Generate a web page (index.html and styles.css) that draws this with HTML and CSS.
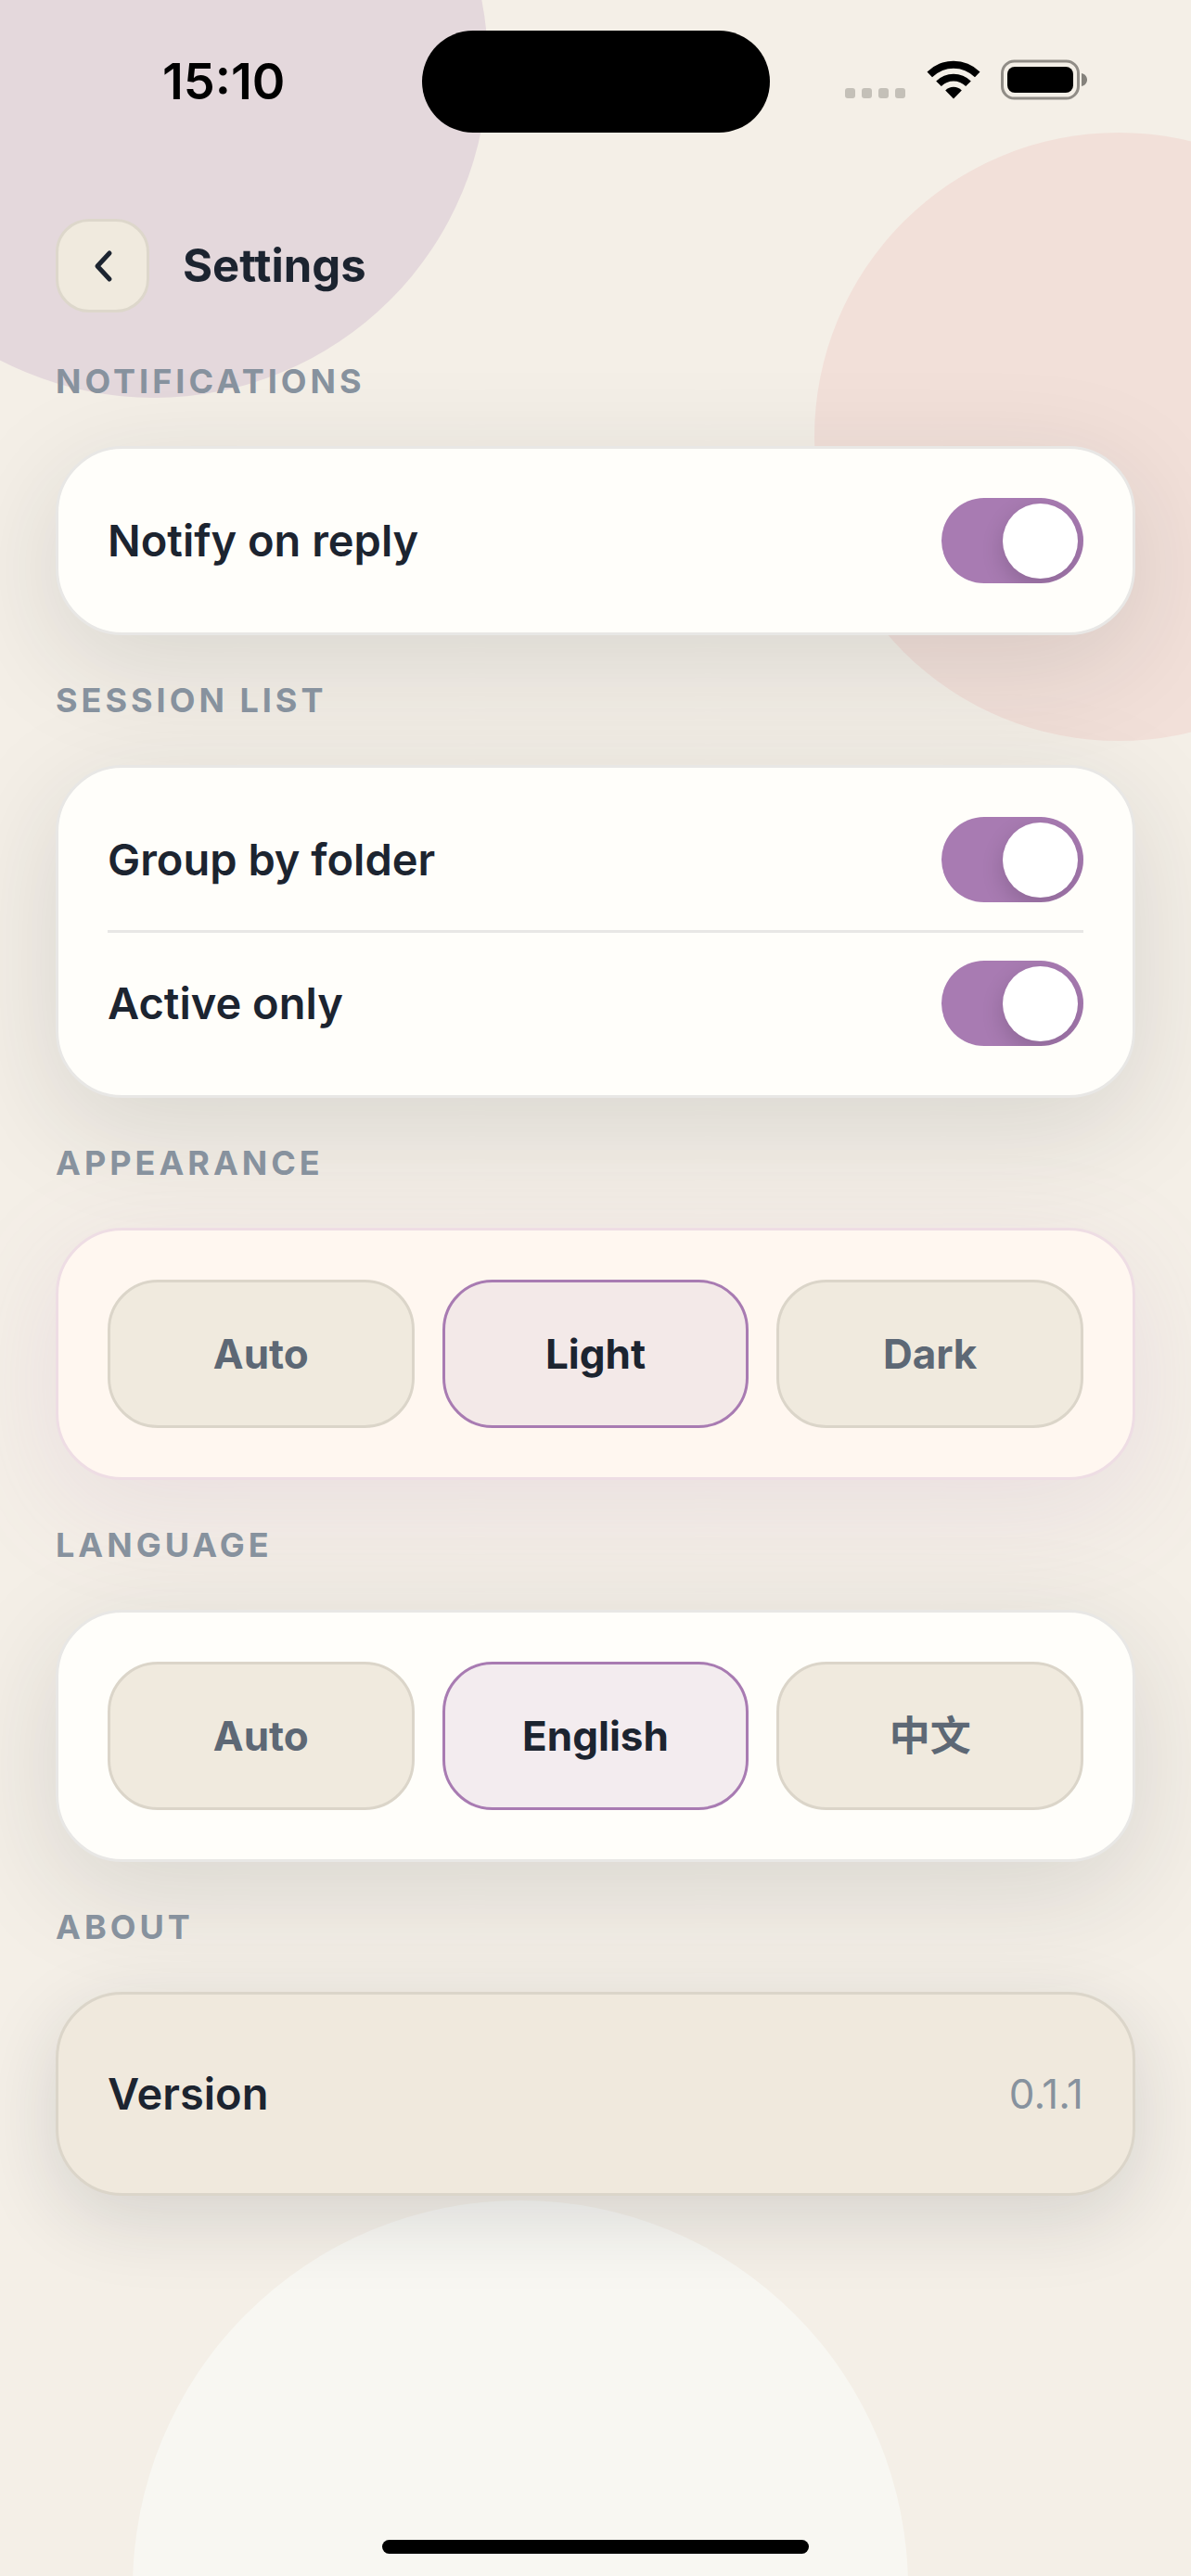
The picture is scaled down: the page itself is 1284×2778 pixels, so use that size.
FILE: index.html
```html
<!DOCTYPE html>
<html lang="en">
<head>
  <meta charset="UTF-8" />
  <meta name="viewport" content="width=device-width, initial-scale=1.0" />
  <title>Settings</title>
  <link rel="stylesheet" href="styles.css">
</head>
<body>
  <div class="screen">
    <div class="blob blob-purple"></div>
    <div class="blob blob-pink"></div>
    <div class="blob blob-white"></div>

    <div class="status-bar">
      <span class="time">15:10</span>
      <div class="island"></div>
      <div class="status-icons">
        <svg width="66" height="44" viewBox="0 0 66 44" fill="#c4c0b8">
          <rect x="0" y="31" width="11" height="11" rx="3" />
          <rect x="18" y="31" width="11" height="11" rx="3" />
          <rect x="36" y="31" width="11" height="11" rx="3" />
          <rect x="54" y="31" width="11" height="11" rx="3" />
        </svg>
        <svg width="58" height="44" viewBox="0 0 58 44">
          <path d="M0.5 13.5 A40.5 40.5 0 0 1 57.5 13.5 L52 19.2 A32.6 32.6 0 0 0 6 19.2 Z" />
          <path d="M10.2 23.4 A26.8 26.8 0 0 1 47.8 23.4 L42.2 29 A18.8 18.8 0 0 0 15.8 29 Z" />
          <path d="M20.2 33.4 A12.6 12.6 0 0 1 37.8 33.4 L29 42.4 Z" />
        </svg>
        <svg width="94" height="44" viewBox="0 0 94 44">
          <rect x="1.5" y="2" width="82" height="40" rx="13" fill="none" stroke="#918d87" stroke-width="3" />
          <rect x="7" y="8" width="71" height="28" rx="8" />
          <path d="M87 15 C91 16 93 19 93 22 C93 25 91 28 87 29 Z" fill="#85827c" />
        </svg>
      </div>
    </div>

    <header class="header">
      <button class="back" aria-label="Back">
        <svg width="24" height="36" viewBox="0 0 24 36" fill="none" stroke="#1c2430" stroke-width="5" stroke-linecap="round" stroke-linejoin="round">
          <path d="M19 4 L6 18 L19 32" />
        </svg>
      </button>
      <h1>Settings</h1>
    </header>

    <main>
      <h2>NOTIFICATIONS</h2>
      <section class="card">
        <div class="row">
          <label for="notify">Notify on reply</label>
          <input type="checkbox" class="switch" id="notify" checked />
        </div>
      </section>

      <h2>SESSION LIST</h2>
      <section class="card">
        <div class="row">
          <label for="group">Group by folder</label>
          <input type="checkbox" class="switch" id="group" checked />
        </div>
        <hr />
        <div class="row">
          <label for="active">Active only</label>
          <input type="checkbox" class="switch" id="active" checked />
        </div>
      </section>

      <h2>APPEARANCE</h2>
      <section class="card card-warm">
        <div class="options">
          <button class="option">Auto</button>
          <button class="option selected">Light</button>
          <button class="option">Dark</button>
        </div>
      </section>

      <h2>LANGUAGE</h2>
      <section class="card">
        <div class="options">
          <button class="option">Auto</button>
          <button class="option selected">English</button>
          <button class="option" lang="zh">中文</button>
        </div>
      </section>

      <h2>ABOUT</h2>
      <section class="card card-sand">
        <div class="row">
          <span>Version</span>
          <span class="value">0.1.1</span>
        </div>
      </section>
    </main>

    <div class="home-indicator"></div>
  </div>

  <script>
    // one selected option per group
    document.querySelectorAll(".options").forEach((group) => {
      const options = group.querySelectorAll(".option");
      options.forEach((btn) => {
        btn.addEventListener("click", () => {
          options.forEach((b) => b.classList.remove("selected"));
          btn.classList.add("selected");
        });
      });
    });
  </script>
</body>
</html>
```
FILE: styles.css
```css
* {
  box-sizing: border-box;
}

body {
  margin: 0;
  background-color: #f4efe7;
  color: #1c2430;
  font-family: Inter, "Noto Sans CJK SC", sans-serif;
}

button {
  font-family: inherit;
  cursor: pointer;
}

.screen {
  position: relative;
  display: flex;
  flex-direction: column;
  min-height: 100vh;
  padding: 33px 60px 24px;
  overflow: hidden;
  isolation: isolate;
}

/* background circles */
.blob {
  position: absolute;
  z-index: -1;
  border-radius: 50%;
}

.blob-purple {
  top: -291px;
  left: -194px;
  width: 720px;
  height: 720px;
  background-color: #e4d8dc;
}

.blob-pink {
  top: 143px;
  right: -250px;
  width: 656px;
  height: 656px;
  background-color: #f2e0d9;
}

.blob-white {
  bottom: -431px;
  left: 143px;
  width: 836px;
  height: 836px;
  background-color: #f8f7f2;
}

.status-bar {
  display: grid;
  grid-template-columns: 1fr 375px 1fr;
  align-items: center;
}

.time {
  padding-right: 32px;
  text-align: center;
  font-size: 54px;
  line-height: 60px;
  font-weight: 600;
  color: #000;
}

.island {
  height: 110px;
  border-radius: 55px;
  background-color: #000;
}

.status-icons {
  display: flex;
  justify-content: flex-end;
  gap: 22px;
  padding: 0 51px 4px 0;
}

.header {
  display: flex;
  align-items: center;
  gap: 36px;
  margin-top: 93px;
}

.back {
  display: flex;
  align-items: center;
  justify-content: center;
  width: 101px;
  height: 101px;
  padding: 0;
  border: 3px solid #ddd7cb;
  border-radius: 36px;
  background-color: #f0eade;
}

h1 {
  margin: 0;
  font-size: 49px;
  line-height: 60px;
  font-weight: 700;
}

main {
  display: flow-root;
  margin-top: 4px;
}

h2 {
  margin: 48px 0;
  font-size: 36px;
  line-height: 44px;
  font-weight: 700;
  letter-spacing: 4px;
  color: #87929e;
}

.card {
  padding: 53px;
  border: 3px solid #e8e7e5;
  border-radius: 72px;
  background-color: #fffefa;
  box-shadow: 0 30px 120px rgba(28, 36, 48, 0.13);
}

.card-warm {
  border-color: #eedde4;
  background-color: #fff7f0;
  box-shadow: 0 30px 120px rgba(168, 123, 178, 0.14);
}

.card-sand {
  border-color: #dbd5c9;
  background-color: #f0e9dd;
  box-shadow: 0 24px 84px rgba(28, 36, 48, 0.14);
}

.row {
  display: flex;
  align-items: center;
  justify-content: space-between;
  min-height: 92px;
  font-size: 47px;
  line-height: 56px;
  font-weight: 600;
}

.card-sand .row {
  min-height: 108px;
}

.value {
  font-size: 44px;
  font-weight: 400;
  color: #87929e;
}

hr {
  height: 3px;
  margin: 30px 0;
  border: 0;
  background-color: #e8e7e5;
}

.switch {
  display: flex;
  align-items: center;
  appearance: none;
  width: 153px;
  height: 92px;
  margin: 0;
  padding: 0 6px;
  border-radius: 46px;
  background-color: #c9c6c0;
  cursor: pointer;
  overflow: hidden;
}

.switch::before {
  content: "";
  width: 81px;
  height: 81px;
  border-radius: 50%;
  background-color: #fff;
  box-shadow: 0 9px 24px rgba(0, 0, 0, 0.16);
}

.switch:checked {
  justify-content: flex-end;
  background-color: #a87bb2;
}

.options {
  display: grid;
  grid-template-columns: repeat(3, 1fr);
  gap: 30px;
}

.option {
  height: 160px;
  border: 3px solid #dbd5c9;
  border-radius: 54px;
  background-color: #f0eade;
  color: #5d6875;
  font-size: 44px;
  line-height: 52px;
  font-weight: 700;
}

.option.selected {
  border-color: #a87bb2;
  background-color: #f3ecef;
  color: #1c2430;
}

.card-warm .option.selected {
  background-color: #f3e9e8;
}

.home-indicator {
  align-self: center;
  width: 460px;
  height: 15px;
  margin-top: auto;
  border-radius: 8px;
  background-color: #000;
}
```
